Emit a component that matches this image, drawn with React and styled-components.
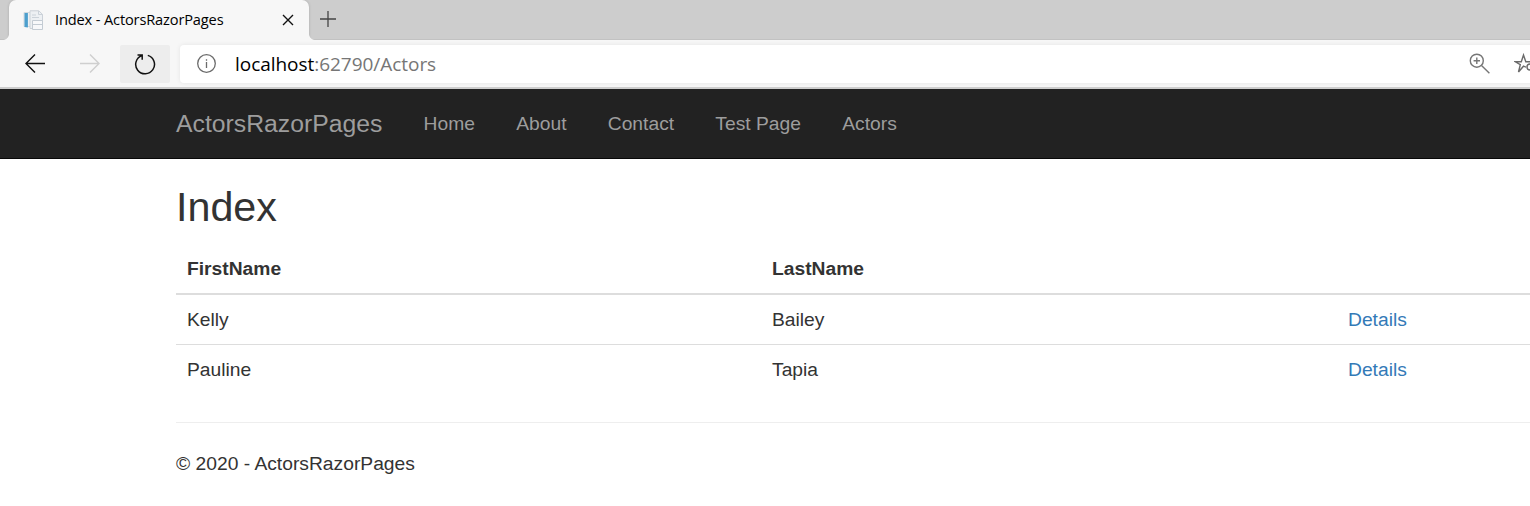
import React from 'react';
import styled, { createGlobalStyle, css } from 'styled-components';

const Global = createGlobalStyle`
  *, *::before, *::after { box-sizing: border-box; }
  body {
    margin: 0;
    background: #fff;
    color: #333;
    overflow: hidden;
    font: 19.25px/27.5px "Liberation Sans", Arial, sans-serif;
  }
`;

const Window = styled.div`
  width: 100%;
  height: 506px;
  overflow: hidden;
`;

const TabStrip = styled.div`
  display: flex;
  height: 40px;
  padding-left: 9px;
  background: #cdcdcd;
  box-shadow: inset 0 -1px 0 #c2c2c2;
`;

const flare = css`
  content: "";
  position: absolute;
  bottom: 0;
  width: 6px;
  height: 6px;
`;

const Tab = styled.div`
  position: relative;
  display: flex;
  align-items: center;
  width: 300px;
  height: 40px;
  padding: 0 15px 0 14px;
  border-radius: 7px 7px 0 0;
  background: #f7f7f7;
  box-shadow: 0 0 3px rgba(0, 0, 0, 0.18);
  clip-path: inset(0 -6px 0 -6px);
  &::before {
    ${flare}
    left: -6px;
    background: radial-gradient(circle at 0 0, transparent 5.5px, #f7f7f7 6.3px);
  }
  &::after {
    ${flare}
    right: -6px;
    background: radial-gradient(circle at 100% 0, transparent 5.5px, #f7f7f7 6.3px);
  }
`;

const TabTitle = styled.span`
  flex: 1;
  margin-left: 11px;
  padding-bottom: 2px;
  color: #000;
  font: 14.6px/20px "Open Sans", "Noto Sans", sans-serif;
  letter-spacing: -0.14px;
  white-space: nowrap;
`;

const NewTab = styled.div`
  display: flex;
  align-items: center;
  margin-left: 10px;
  height: 38px;
`;

const Toolbar = styled.div`
  display: flex;
  align-items: center;
  height: 49px;
  padding: 0 0 0 16px;
  background: #f7f7f7;
  border-bottom: 2px solid #cdcdcd;
`;

const ToolButton = styled.div`
  display: flex;
  align-items: center;
  justify-content: center;
  flex: none;
  width: ${(p) => p.$width || 38}px;
  height: 38px;
  margin-right: ${(p) => p.$gap}px;
  border-radius: 2px;
  background: ${(p) => (p.$active ? '#ededed' : 'transparent')};
`;

const AddressBar = styled.div`
  display: flex;
  align-items: center;
  flex: none;
  width: 1400px;
  height: 38px;
  padding-left: 16px;
  border-radius: 4px;
  background: #fff;
  box-shadow: 0 0 5px rgba(0, 0, 0, 0.08);
`;

const Url = styled.span`
  width: 1234px;
  margin-left: 19px;
  flex: none;
  color: #767676;
  font: 19px/26px "Open Sans", "Noto Sans", sans-serif;
  letter-spacing: -0.04px;
  white-space: nowrap;
`;

const Host = styled.span`
  color: #000;
`;

const StarSlot = styled.span`
  display: flex;
  margin-left: 23px;
`;

const Navbar = styled.nav`
  display: flex;
  align-items: center;
  height: 70px;
  padding-left: 176px;
  background: #222;
  border-bottom: 1px solid #080808;
`;

const NavLink = styled.a`
  margin-right: 41.25px;
  color: #9d9d9d;
  font-size: ${(p) => (p.$brand ? 24.75 : 19.25)}px;
  white-space: nowrap;
`;

const Page = styled.main`
  width: 1743px;
  padding-left: 176px;
`;

const Heading = styled.h2`
  margin: 0;
  padding: 25px 0 13px;
  font-size: 41.25px;
  font-weight: 400;
  line-height: 46px;
`;

const Table = styled.table`
  width: 1567px;
  table-layout: fixed;
  border-collapse: collapse;
`;

const HeadCell = styled.th`
  width: ${(p) => p.$width}px;
  height: 51px;
  padding: 2px 11px 0;
  border-bottom: 2px solid #ddd;
  text-align: left;
`;

const Cell = styled.td`
  height: 50px;
  padding: 0 11px;
  border-top: 1px solid #ddd;
  tr:first-child > & {
    border-top: 0;
  }
`;

const DetailsLink = styled.a`
  color: #337ab7;
`;

const Footer = styled.footer`
  margin-top: 28px;
  padding-top: 27px;
  border-top: 1px solid #eee;
`;

const actors = [
  { first: 'Kelly', last: 'Bailey' },
  { first: 'Pauline', last: 'Tapia' },
];

const PageIcon = () => (
  <svg width="21" height="20" viewBox="0 0 21 20">
    <path d="M1 2.5h12v14H1z" fill="#eef1f3" stroke="#d3d9de" />
    <path d="M1.5 3h3.4v14.6L1.5 17z" fill="#4d9fcd" />
    <path d="M7 .8h8.8l3.7 3.6V18.500H7z" fill="#edf0f3" stroke="#cbd1d8" />
    <path d="M15.500 1v3.500h4M9 5h4M9 7.500h7" fill="none" stroke="#cbd2d9" />
    <path d="M9.500 10.500h10v9h-10z" fill="#f7f8fa" stroke="#c3cbd3" />
    <path d="M10 14.500h9" stroke="#c3cbd3" />
  </svg>
);

const CloseIcon = () => (
  <svg width="12" height="12" viewBox="0 0 12 12" stroke="#111" strokeWidth="1.4">
    <path d="M1 1l10 10M11 1L1 11" />
  </svg>
);

const PlusIcon = () => (
  <svg width="18" height="18" viewBox="0 0 18 18" stroke="#444" strokeWidth="1.3">
    <path d="M9 1v16M1 9h16" />
  </svg>
);

const Arrow = ({ color, forward }) => (
  <svg width="22" height="20" viewBox="0 0 22 20" fill="none" stroke={color} strokeWidth="1.4">
    <path d={forward ? 'M1 9.500h19M11 .5l9 9-9 9' : 'M21 9.500H2M11 .5l-9 9 9 9'} />
  </svg>
);

const ReloadIcon = () => (
  <svg width="22" height="22" viewBox="0 0 22 22" fill="none" stroke="#111" strokeWidth="1.5">
    <path d="M13.800 2.400A9.400 9.400 0 1 1 7.800 2.600M3.500 2h4.700v4.700" />
  </svg>
);

const InfoIcon = () => (
  <svg width="20" height="20" viewBox="0 0 20 20" fill="none" stroke="#6b6b6b" strokeWidth="1.3">
    <circle cx="10.500" cy="9.500" r="8.800" />
    <path d="M10.500 8v6M10.500 5.200v1.600" />
  </svg>
);

const ZoomIcon = () => (
  <svg width="22" height="22" viewBox="0 0 22 22" fill="none" stroke="#767676" strokeWidth="1.4">
    <circle cx="7.800" cy="7.700" r="6.500" />
    <path d="M12.500 12.400l7.900 7.900M7.800 4.500v6.400M4.600 7.700H11" />
  </svg>
);

const StarIcon = () => (
  <svg width="22" height="22" viewBox="0 0 22 22" fill="none" stroke="#6b6b6b" strokeWidth="1.4">
    <path d="M12 14.200l-2.500-1-5 5.800 1.800-7.400L1.300 8.800h6L9.500 2l2.300 6.800h6" />
    <circle cx="16" cy="14" r="3" />
  </svg>
);

export default function App() {
  return (
    <Window>
      <Global />
      <TabStrip>
        <Tab>
          <PageIcon />
          <TabTitle>Index - ActorsRazorPages</TabTitle>
          <CloseIcon />
        </Tab>
        <NewTab>
          <PlusIcon />
        </NewTab>
      </TabStrip>
      <Toolbar>
        <ToolButton $gap={17}>
          <Arrow color="#111" />
        </ToolButton>
        <ToolButton $gap={11}>
          <Arrow color="#cfcfcf" forward />
        </ToolButton>
        <ToolButton $width={50} $gap={10} $active>
          <ReloadIcon />
        </ToolButton>
        <AddressBar>
          <InfoIcon />
          <Url>
            <Host>localhost</Host>:62790/Actors
          </Url>
          <ZoomIcon />
          <StarSlot>
            <StarIcon />
          </StarSlot>
        </AddressBar>
      </Toolbar>
      <Navbar>
        <NavLink $brand>ActorsRazorPages</NavLink>
        {['Home', 'About', 'Contact', 'Test Page', 'Actors'].map((label) => (
          <NavLink key={label}>{label}</NavLink>
        ))}
      </Navbar>
      <Page>
        <Heading>Index</Heading>
        <Table>
          <thead>
            <tr>
              <HeadCell $width={585}>FirstName</HeadCell>
              <HeadCell $width={576}>LastName</HeadCell>
              <HeadCell $width={406} />
            </tr>
          </thead>
          <tbody>
            {actors.map((actor) => (
              <tr key={actor.first}>
                <Cell>{actor.first}</Cell>
                <Cell>{actor.last}</Cell>
                <Cell>
                  <DetailsLink>Details</DetailsLink>
                </Cell>
              </tr>
            ))}
          </tbody>
        </Table>
        <Footer>© 2020 - ActorsRazorPages</Footer>
      </Page>
    </Window>
  );
}
